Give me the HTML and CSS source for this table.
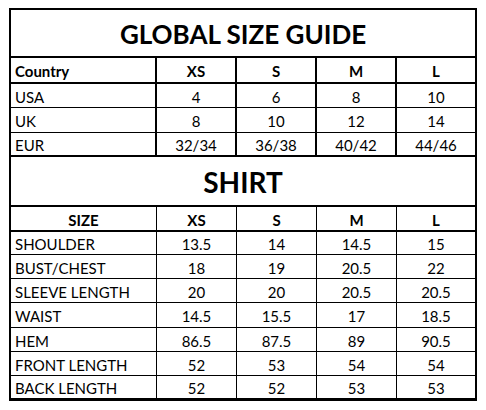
FILE: index.html
```html
<!DOCTYPE html>
<html>
<head>
<meta charset="utf-8">
<link rel="stylesheet" href="styles.css">
</head>
<body>
<div class="guide">
  <div class="title title-global">GLOBAL SIZE GUIDE</div>
  <div class="grid grid-global">
    <div class="c h first">Country</div><div class="c h">XS</div><div class="c h">S</div><div class="c h">M</div><div class="c h last">L</div>
    <div class="c first r1">USA</div><div class="c r1">4</div><div class="c r1">6</div><div class="c r1">8</div><div class="c last r1">10</div>
    <div class="c first r2">UK</div><div class="c r2">8</div><div class="c r2">10</div><div class="c r2">12</div><div class="c last r2">14</div>
    <div class="c first r3 end">EUR</div><div class="c r3 end">32/34</div><div class="c r3 end">36/38</div><div class="c r3 end">40/42</div><div class="c last r3 end">44/46</div>
  </div>
  <div class="title title-shirt">SHIRT</div>
  <div class="grid grid-shirt">
    <div class="c h hc first">SIZE</div><div class="c h">XS</div><div class="c h">S</div><div class="c h">M</div><div class="c h last">L</div>
    <div class="c first s1">SHOULDER</div><div class="c s1">13.5</div><div class="c s1">14</div><div class="c s1">14.5</div><div class="c last s1">15</div>
    <div class="c first s2">BUST/CHEST</div><div class="c s2">18</div><div class="c s2">19</div><div class="c s2">20.5</div><div class="c last s2">22</div>
    <div class="c first s3">SLEEVE LENGTH</div><div class="c s3">20</div><div class="c s3">20</div><div class="c s3">20.5</div><div class="c last s3">20.5</div>
    <div class="c first s4">WAIST</div><div class="c s4">14.5</div><div class="c s4">15.5</div><div class="c s4">17</div><div class="c last s4">18.5</div>
    <div class="c first s5">HEM</div><div class="c s5">86.5</div><div class="c s5">87.5</div><div class="c s5">89</div><div class="c last s5">90.5</div>
    <div class="c first s6">FRONT LENGTH</div><div class="c s6">52</div><div class="c s6">53</div><div class="c s6">54</div><div class="c last s6">54</div>
    <div class="c first s7 end">BACK LENGTH</div><div class="c s7 end">52</div><div class="c s7 end">52</div><div class="c s7 end">53</div><div class="c last s7 end">53</div>
  </div>
</div>
</body>
</html>
```
FILE: styles.css
```css
html, body {
  margin: 0;
  padding: 0;
  background: #fff;
}
body {
  font-family: Lato, "Open Sans", sans-serif;
  color: #000;
}
.guide {
  box-sizing: border-box;
  margin: 8px 0 0 9px;
  width: 468px;
  border: 2px solid #000;
  border-bottom-width: 3px;
}
.title {
  box-sizing: border-box;
  display: flex;
  align-items: center;
  justify-content: center;
  font-weight: 700;
  border-bottom: 2px solid #000;
}
.title-global {
  height: 48px;
  font-size: 26px;
  padding-top: 2px;
}
.title-shirt {
  height: 50px;
  font-size: 28px;
  padding-top: 2px;
}
.grid {
  display: grid;
  grid-template-columns: 146px 80px 80px 80px 1fr;
}
.c {
  box-sizing: border-box;
  display: flex;
  align-items: center;
  justify-content: center;
  font-size: 15px;
  border-bottom: 1px solid #000;
  border-right: 1px solid #000;
  padding-top: 2px;
}
.grid-global .c {
  border-right-width: 2px;
}
.c.last {
  border-right: none;
}
.c.first {
  justify-content: flex-start;
  padding-left: 4px;
}
.c.hc {
  justify-content: center;
  padding-left: 0;
}
.c.h {
  font-weight: 700;
  height: 26px;
  border-bottom-width: 2px;
}
.grid-shirt .c.h {
  height: 25px;
}
.r1 { height: 24px; }
.r2 { height: 25px; }
.r3 { height: 24px; }
.grid-global .c.end {
  border-bottom-width: 2px;
}
.grid-shirt .c.end {
  border-bottom: none;
}
.s1 { height: 23px; }
.s2 { height: 24px; }
.s3 { height: 24px; }
.s4 { height: 25px; }
.s5 { height: 24px; }
.s6 { height: 24px; }
.s7 { height: 22px; }
```
